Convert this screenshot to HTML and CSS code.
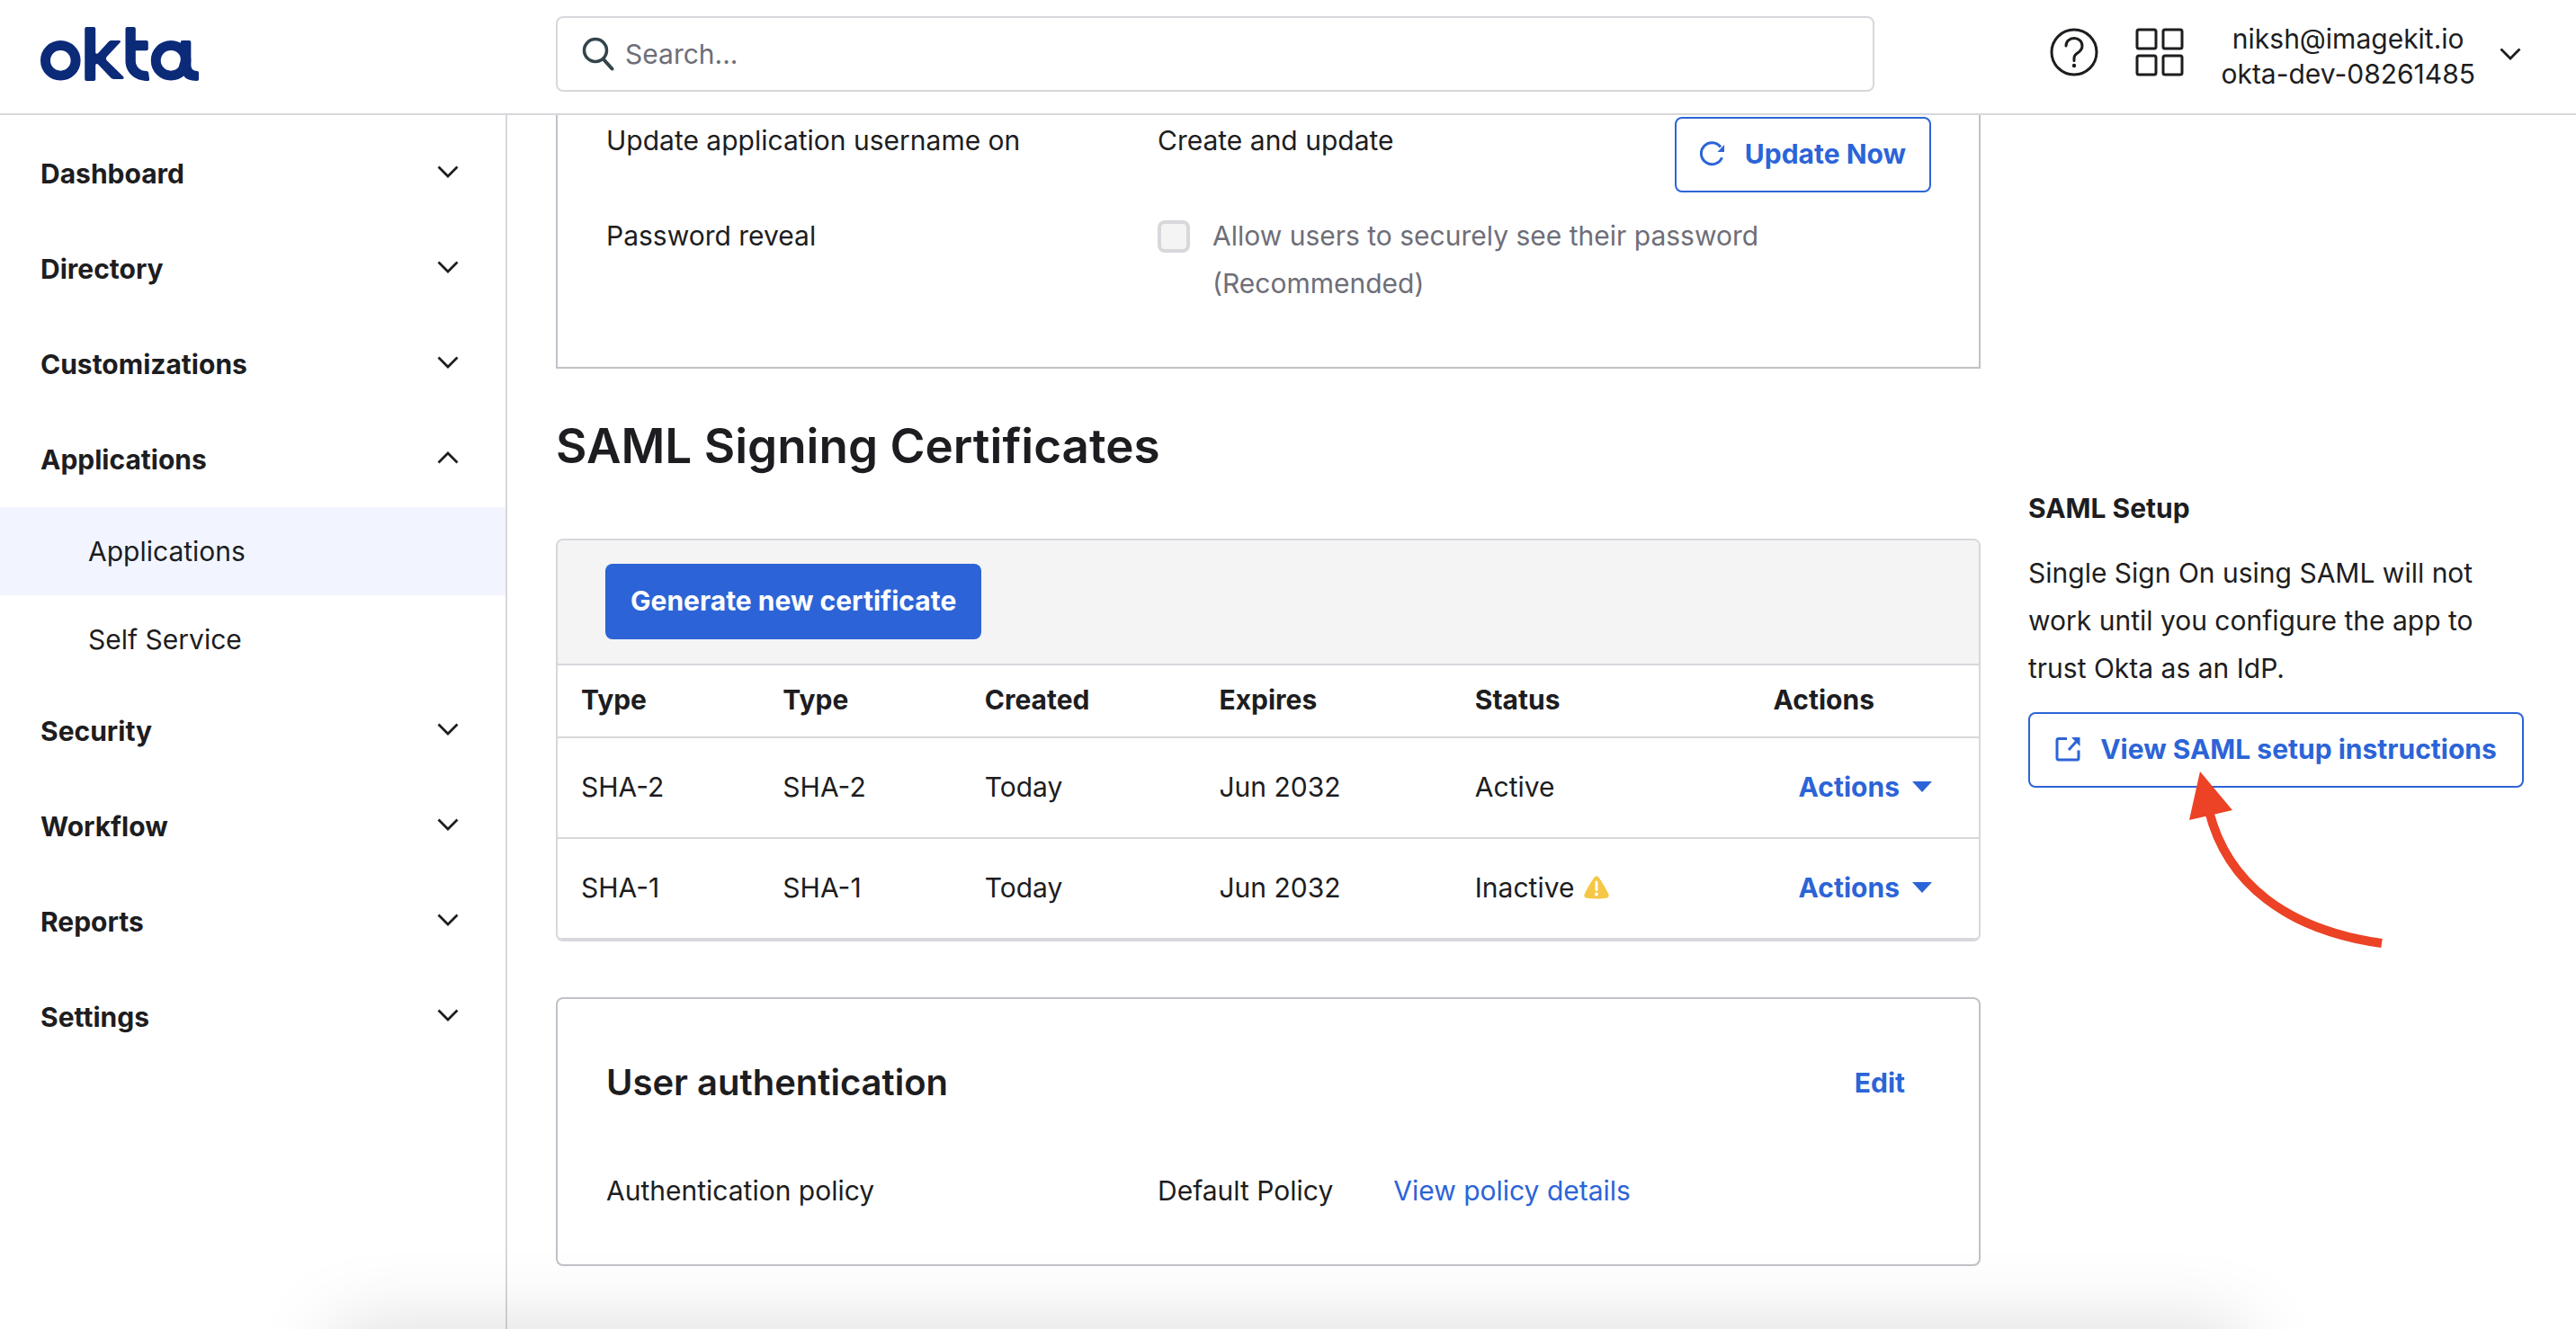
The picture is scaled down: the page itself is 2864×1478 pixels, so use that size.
FILE: index.html
```html
<!DOCTYPE html>
<html lang="en">
<head>
<meta charset="utf-8">
<title>Okta Admin - Applications</title>
<link rel="stylesheet" href="styles.css">
</head>
<body>
<svg class="sprite" aria-hidden="true">
  <symbol id="chevron" viewBox="0 0 24 14"><path d="M1.500 1.500 12 12 22.500 1.500" fill="none" stroke="currentColor" stroke-width="2.800"/></symbol>
</svg>

<header class="topbar">
  <a class="logo" href="#" aria-label="Okta">
    <svg viewBox="0 0 529 180" width="176" height="60" fill="#0b2a78">
      <circle cx="67" cy="112" r="50.500" fill="none" stroke="#0b2a78" stroke-width="33"/>
      <path d="M148 6q0-6 6-6h24q6 0 6 6v80q3 6 9 1l35-38q4-4 9-4h26q7 1 3 7l-45 48q-4 6 0 11l56 55q4 8-4 8h-28q-6 0-10-4l-42-45q-7-5-9 2v48q0 5-6 5h-24q-6 0-6-6z"/>
      <path d="M284 6q0-6 6-6h22q6 0 6 6v39h36q6 0 6 6v22q0 6-6 6h-36v34c0 18 14 34 36 34q6 0 7 5l3 22q1 6-5 6c-43 0-75-28-75-67z"/>
      <circle cx="436" cy="112" r="50.500" fill="none" stroke="#0b2a78" stroke-width="33"/>
      <path d="M468 51q0-6 6-6h23q6 0 6 6v73c0 18 8 23 20 23q6 0 6 5v22q0 6-6 6c-24 0-36-5-44-16l-20-20 9-32z"/>
    </svg>
  </a>
  <label class="search">
    <svg viewBox="0 0 36 38" width="36" height="38" fill="none" stroke="#33444c" stroke-linecap="round"><circle cx="15" cy="15" r="12.500" stroke-width="3.500"/><path d="M24 25l9.500 10.500" stroke-width="4"/></svg>
    <input type="search" placeholder="Search..." aria-label="Search">
  </label>
  <div class="tools">
    <button class="icon-btn" aria-label="Help">
      <svg viewBox="0 0 54 54" width="54" height="54" fill="none" stroke="currentColor" stroke-width="3"><circle cx="27" cy="27" r="25"/><path d="M18 20c0-5 4-8.500 9-8.500s9 3.500 9 8.500-3 6.500-6 8.500c-2 1.500-3 3-3 5v3" stroke-linecap="round"/><circle cx="27" cy="42" r="2.200" fill="currentColor" stroke="none"/></svg>
    </button>
    <button class="icon-btn" aria-label="Apps">
      <svg viewBox="0 0 54 54" width="54" height="54" fill="none" stroke="currentColor" stroke-width="3"><rect x="2" y="2" width="21" height="21" rx="2"/><rect x="31" y="2" width="21" height="21" rx="2"/><rect x="2" y="31" width="21" height="21" rx="2"/><rect x="31" y="31" width="21" height="21" rx="2"/></svg>
    </button>
    <button class="account">
      <span class="account-name">niksh@imagekit.io<br>okta-dev-08261485</span>
      <svg class="chevron"><use href="#chevron"/></svg>
    </button>
  </div>
</header>

<div class="layout">
  <nav class="sidebar">
    <button class="nav-item">Dashboard<svg class="chevron"><use href="#chevron"/></svg></button>
    <button class="nav-item">Directory<svg class="chevron"><use href="#chevron"/></svg></button>
    <button class="nav-item">Customizations<svg class="chevron"><use href="#chevron"/></svg></button>
    <button class="nav-item" aria-expanded="true">Applications<svg class="chevron up"><use href="#chevron"/></svg></button>
    <a class="nav-sub current" href="#">Applications</a>
    <a class="nav-sub" href="#">Self Service</a>
    <button class="nav-item">Security<svg class="chevron"><use href="#chevron"/></svg></button>
    <button class="nav-item">Workflow<svg class="chevron"><use href="#chevron"/></svg></button>
    <button class="nav-item">Reports<svg class="chevron"><use href="#chevron"/></svg></button>
    <button class="nav-item">Settings<svg class="chevron"><use href="#chevron"/></svg></button>
  </nav>

  <main class="content">
    <div class="column">
      <section class="card credentials">
        <div>Update application username on</div>
        <div>Create and update</div>
        <button class="btn outline">
          <svg viewBox="0 0 28 28" width="28" height="28"><path d="M24.500 18.200A12 12 0 1 1 23 6.500" fill="none" stroke="currentColor" stroke-width="3"/><path d="M27 4v8h-7.500z" fill="currentColor"/></svg>
          Update Now
        </button>
        <div>Password reveal</div>
        <label class="check"><input type="checkbox" disabled><span>Allow users to securely see their password (Recommended)</span></label>
      </section>

      <h2 class="section-title">SAML Signing Certificates</h2>

      <section class="certs">
        <div class="certs-bar"><button class="btn primary">Generate new certificate</button></div>
        <table>
          <colgroup><col class="c-type"><col class="c-type"><col class="c-created"><col class="c-expires"><col class="c-status"><col></colgroup>
          <thead><tr><th>Type</th><th>Type</th><th>Created</th><th>Expires</th><th>Status</th><th>Actions</th></tr></thead>
          <tbody>
            <tr><td>SHA-2</td><td>SHA-2</td><td>Today</td><td>Jun 2032</td><td>Active</td><td><button class="menu-btn">Actions<svg viewBox="0 0 22 12" width="22" height="12"><path d="M0 0h22L11 12z" fill="currentColor"/></svg></button></td></tr>
            <tr><td>SHA-1</td><td>SHA-1</td><td>Today</td><td>Jun 2032</td><td><span class="status">Inactive<svg viewBox="0 0 28 26" width="28" height="26"><path d="M11.200 2.200Q14-1.800 16.800 2.200C21 8 25 15 27.400 20.500Q28.600 24 25 24.800 14 26.400 3 24.800-.6 24 .6 20.500C3 15 7 8 11.200 2.200z" fill="#f5c746"/><path d="M14 7v8.500" stroke="#fff" stroke-width="3" stroke-linecap="round"/><circle cx="14" cy="20.500" r="2" fill="#fff"/></svg></span></td><td><button class="menu-btn">Actions<svg viewBox="0 0 22 12" width="22" height="12"><path d="M0 0h22L11 12z" fill="currentColor"/></svg></button></td></tr>
          </tbody>
        </table>
      </section>

      <section class="card auth">
        <div class="auth-head"><h3>User authentication</h3><button class="edit">Edit</button></div>
        <div class="auth-row">
          <div>Authentication policy</div>
          <div class="policy"><span>Default Policy</span><a href="#">View policy details</a></div>
        </div>
      </section>
    </div>

    <aside class="setup">
      <h4>SAML Setup</h4>
      <p>Single Sign On using SAML will not work until you configure the app to trust Okta as an IdP.</p>
      <div class="setup-action">
        <button class="btn outline wide">
          <svg viewBox="0 0 28 28" width="28" height="28"><path d="M13 2.500H4Q2 2.500 2 4.500V24q0 2 2 2h20q2 0 2-2v-8.500" fill="none" stroke="currentColor" stroke-width="3"/><path d="M15 15l9-10" fill="none" stroke="currentColor" stroke-width="3"/><path d="M18 1h9.500v10z" fill="currentColor"/></svg>
          View SAML setup instructions
        </button>
        <svg class="arrow" viewBox="0 0 220 202" width="220" height="202" aria-hidden="true"><path d="M26 48C46 128 112 180 218 195" fill="none" stroke="#ec4226" stroke-width="10"/><path d="M16 4l36 43-48 11z" fill="#ec4226"/></svg>
      </div>
    </aside>
  </main>
</div>
<div class="dock-shadow"></div>
</body>
</html>
```

FILE: styles.css
```css
* { box-sizing: border-box; }

:root {
  --ink: #1d1d21;
  --muted: #6e6e78;
  --line: #d7d7dc;
  --line-dark: #c1c1c8;
  --blue: #2c64d7;
}

body {
  margin: 0;
  min-height: 100vh;
  display: flex;
  flex-direction: column;
  background: #fff;
  color: var(--ink);
  font: 400 30px/53px Inter, "Liberation Sans", sans-serif;
}

button, input { font: inherit; color: inherit; }
button { border: 0; padding: 0; background: none; cursor: pointer; }
svg { display: block; flex: none; }
a { color: var(--blue); text-decoration: none; }
h2, h3, h4, p { margin: 0; }
.sprite { position: absolute; width: 0; height: 0; }
.chevron { width: 24px; height: 14px; }
.chevron.up { transform: rotate(180deg); }

/* Top bar */
.topbar {
  display: flex;
  align-items: center;
  height: 128px;
  padding: 0 61px 6px 45px;
  border-bottom: 2px solid var(--line);
}
.logo { width: 573px; }
.search {
  flex: 1;
  display: flex;
  align-items: center;
  gap: 12px;
  height: 84px;
  padding: 0 27px;
  border: 2px solid var(--line);
  border-radius: 8px;
}
.search input { flex: 1; min-width: 0; padding: 0; border: 0; outline: 0; background: none; }
.search input::placeholder { color: var(--muted); opacity: 1; }
.tools { display: flex; align-items: center; gap: 41px; margin-left: 195px; }
.icon-btn { padding-bottom: 5px; }
.account { display: flex; align-items: center; gap: 27px; }
.account-name { padding-top: 6px; line-height: 39px; text-align: center; }

/* Sidebar */
.layout { flex: 1; display: grid; grid-template-columns: 564px 1fr; }
.sidebar {
  display: flex;
  flex-direction: column;
  padding-top: 12px;
  border-right: 2px solid var(--line);
}
.nav-item {
  display: flex;
  align-items: center;
  justify-content: space-between;
  height: 106px;
  padding: 0 52px 0 45px;
  font-weight: 700;
}
.nav-item .chevron { margin-bottom: 4px; }
.nav-sub {
  display: flex;
  align-items: center;
  height: 98px;
  padding-left: 98px;
  color: var(--ink);
}
.nav-sub.current { background: #f2f5ff; }

/* Content */
.content {
  display: grid;
  grid-template-columns: 1fr 551px;
  gap: 53px;
  padding: 0 58px 60px 54px;
}
.card { border: 2px solid var(--line-dark); border-radius: 8px; }
.btn {
  display: flex;
  align-items: center;
  justify-content: center;
  gap: 22px;
  height: 84px;
  padding: 0 28px 2px;
  border-radius: 8px;
  font-weight: 700;
}
.btn.outline { padding: 0 26px 2px; border: 2px solid var(--blue); color: var(--blue); background: #fff; }
.btn.primary { background: var(--blue); color: #fff; }
.btn.wide { width: 100%; }

.credentials {
  display: grid;
  grid-template-columns: 613px 1fr auto;
  row-gap: 22px;
  padding: 2px 53px 66px 54px;
  border-top: 0;
  border-radius: 0;
}
.check { grid-column: 2 / -1; display: flex; gap: 25px; color: var(--muted); }
.check input {
  appearance: none;
  flex: none;
  width: 36px;
  height: 36px;
  margin: 9px 0 0;
  border: 4px solid var(--line);
  border-radius: 8px;
  background: #f4f4f4;
}
.check span { max-width: 640px; }

.section-title { margin: 54px 0 71px; font-size: 53px; line-height: 64px; font-weight: 600; }

.certs { border: 2px solid var(--line); border-radius: 8px; overflow: hidden; }
.certs-bar { padding: 26px 53px 27px; border-bottom: 2px solid var(--line); background: #f4f4f5; }
table { width: 100%; table-layout: fixed; border-collapse: separate; border-spacing: 0; }
.c-type { width: 14.2%; }
.c-created { width: 16.5%; }
.c-expires { width: 18%; }
.c-status { width: 21%; }
th, td { padding: 0 0 2px 26px; text-align: left; border-bottom: 2px solid var(--line); }
th { height: 81px; font-weight: 700; }
td { height: 112px; }
.menu-btn { display: flex; align-items: center; gap: 14px; padding-left: 28px; color: var(--blue); font-weight: 700; }
.status { display: flex; align-items: center; gap: 11px; }

.auth { margin-top: 62px; padding: 69px 53px 55px 54px; }
.auth-head { display: flex; align-items: center; justify-content: space-between; height: 48px; margin-bottom: 70px; }
h3 { font-size: 40px; line-height: 48px; font-weight: 600; }
.edit { padding: 0 29px; color: var(--blue); font-weight: 700; }
.auth-row { display: grid; grid-template-columns: 613px 1fr; }
.policy { display: flex; gap: 67px; }

/* Setup column */
.setup { padding-top: 411px; }
h4 { margin-bottom: 19px; font-size: 30px; font-weight: 700; }
.setup p { margin-bottom: 22px; }
.setup-action { position: relative; }
.arrow { position: absolute; left: 175px; top: 62px; }

/* Soft shade rising from the lower edge of the window */
.dock-shadow {
  position: fixed;
  left: 13%;
  right: 13%;
  top: 100%;
  height: 200px;
  box-shadow: 0 0 90px rgba(0, 0, 0, .15);
  pointer-events: none;
}
```
